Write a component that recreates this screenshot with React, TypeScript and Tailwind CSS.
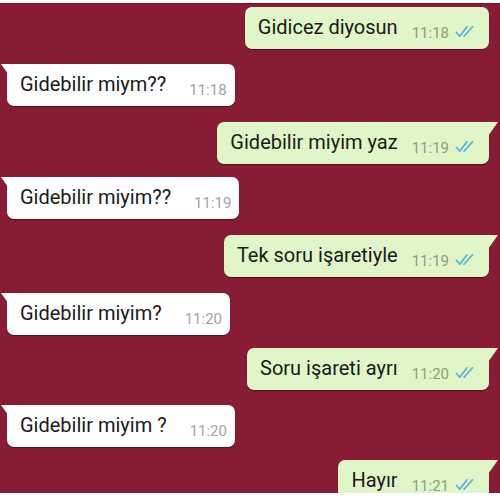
import React from "react";

type Msg = {
  text: string;
  time: string;
  out: boolean;
  tail: boolean;
  mt: string;
};

const messages: Msg[] = [
  { text: "Gidicez diyosun", time: "11:18", out: true, tail: false, mt: "mt-[3px]" },
  { text: "Gidebilir miym??", time: "11:18", out: false, tail: true, mt: "mt-[15px]" },
  { text: "Gidebilir miyim yaz", time: "11:19", out: true, tail: true, mt: "mt-[16px]" },
  { text: "Gidebilir miyim??", time: "11:19", out: false, tail: true, mt: "mt-[13px]" },
  { text: "Tek soru işaretiyle", time: "11:19", out: true, tail: true, mt: "mt-[16px]" },
  { text: "Gidebilir miyim?", time: "11:20", out: false, tail: true, mt: "mt-[16px]" },
  { text: "Soru işareti ayrı", time: "11:20", out: true, tail: true, mt: "mt-[13px]" },
  { text: "Gidebilir miyim ?", time: "11:20", out: false, tail: true, mt: "mt-[15px]" },
  { text: "Hayır", time: "11:21", out: true, tail: true, mt: "mt-[13px]" },
];

function Ticks() {
  return (
    <svg width="20" height="13" viewBox="0 0 20 13" className="ml-[6px] mb-[1px] shrink-0">
      <path d="M1.5 7.5 L4.8 11.2 L12 1.8" fill="none" stroke="#52b3dc" strokeWidth="1.7" strokeLinecap="round" strokeLinejoin="round" />
      <path d="M9 11.2 L17.5 1.8" fill="none" stroke="#52b3dc" strokeWidth="1.7" strokeLinecap="round" />
    </svg>
  );
}

function Bubble({ m }: { m: Msg }) {
  const bg = m.out ? "bg-[#e0f6c9]" : "bg-white";
  const corner = m.tail ? (m.out ? "rounded-tr-none" : "rounded-tl-none") : "";
  return (
    <div className={`${m.mt} flex ${m.out ? "justify-end pr-[11px]" : "justify-start pl-[7px]"}`}>
      <div
        className={`relative flex items-end h-[42px] pt-[8px] pb-[10px] rounded-[7px] ${corner} ${bg} shadow-[0_1px_1px_rgba(0,0,0,0.45)] ${
          m.out ? "pl-[13px] pr-[14px]" : "pl-[13px] pr-[8px]"
        }`}
      >
        {m.tail && (
          <svg
            width="11"
            height="14"
            viewBox="0 0 11 14"
            className={`absolute top-0 ${m.out ? "right-[-10px]" : "left-[-7px]"}`}
          >
            {m.out ? (
              <polygon points="0,0 10,0 0,14" fill="#e0f6c9" />
            ) : (
              <polygon points="11,0 1,0 11,14" fill="#ffffff" />
            )}
          </svg>
        )}
        <span className="text-[20px] leading-[24px] text-[#1a1a1a] whitespace-nowrap">{m.text}</span>
        <span
          className={`text-[15px] leading-none translate-y-[2px] whitespace-nowrap ${
            m.out ? "ml-[14px] text-[#8e9c82]" : "ml-[23px] text-[#a3a3a3]"
          }`}
        >
          {m.time}
        </span>
        {m.out && <Ticks />}
      </div>
    </div>
  );
}

export default function App() {
  return (
    <div className="w-[500px] h-[500px] flex flex-col bg-white font-['Roboto',sans-serif]">
      <div className="h-[3px] bg-white shrink-0" />
      <div className="h-[490px] shrink-0 overflow-hidden bg-[#891c35] border-t border-[#6e1426] flex flex-col">
        {messages.map((m, i) => (
          <Bubble key={i} m={m} />
        ))}
      </div>
      <div className="flex-1 bg-white" />
    </div>
  );
}
